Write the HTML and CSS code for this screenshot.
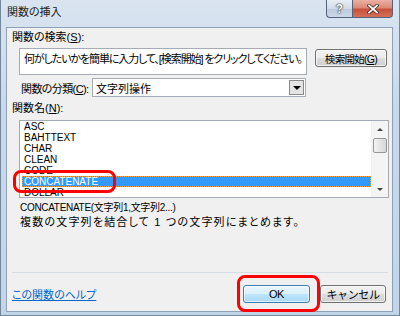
FILE: index.html
```html
<!DOCTYPE html>
<html lang="ja">
<head>
    <meta charset="UTF-8">
    <title>関数の挿入</title>
    <link rel="stylesheet" href="styles.css">
</head>
<body>

    <div class="window">
        <div class="titlebar">
            <span class="title">関数の挿入</span>
            <div class="caption-buttons">
                <span class="cap help">?</span>
                <span class="cap close">
                    <svg width="12" height="10" viewBox="0 0 12 10">
                        <path d="M2 1.5 L10 8.5 M10 1.5 L2 8.5" stroke="#4a2a22" stroke-width="3.4" stroke-linecap="square"/>
                        <path d="M2 1.5 L10 8.5 M10 1.5 L2 8.5" stroke="#fff" stroke-width="1.8" stroke-linecap="square"/>
                    </svg>
                </span>
            </div>
        </div>

        <div class="client">
            <div class="label">関数の検索(<u>S</u>):</div>
            <div class="search-row">
                <div class="textbox">何がしたいかを簡単に入力して、[検索開始] をクリックしてください。</div>
                <button class="btn search-btn">検索開始(<u>G</u>)</button>
            </div>

            <div class="category-row">
                <span class="category-label">関数の分類(<u>C</u>):</span>
                <div class="combo">
                    <span class="combo-value">文字列操作</span>
                    <span class="combo-drop"><span class="tri-down"></span></span>
                </div>
            </div>

            <div class="label label-names">関数名(<u>N</u>):</div>
            <div class="listbox">
                <ul class="items">
                    <li>ASC</li>
                    <li>BAHTTEXT</li>
                    <li>CHAR</li>
                    <li>CLEAN</li>
                    <li>CODE</li>
                    <li class="selected">CONCATENATE</li>
                    <li>DOLLAR</li>
                </ul>
                <div class="scrollbar">
                    <span class="sb-arrow"><span class="tri-up"></span></span>
                    <span class="sb-thumb"></span>
                    <span class="sb-track"></span>
                    <span class="sb-arrow"><span class="tri-down small"></span></span>
                </div>
            </div>

            <div class="syntax">CONCATENATE(文字列1,文字列2...)</div>
            <div class="desc">複数の文字列を結合して 1 つの文字列にまとめます。</div>

            <div class="separator"></div>

            <div class="footer">
                <a class="help-link" href="#">この関数のヘルプ</a>
                <div class="actions">
                    <button class="btn default">OK</button>
                    <button class="btn">キャンセル</button>
                </div>
            </div>
        </div>

        <!-- red annotation marks -->
        <div class="mark mark-list"></div>
        <div class="mark mark-ok"></div>
    </div>

</body>
</html>
```

FILE: styles.css
```css
body {
    margin: 0;
    font-family: "Liberation Sans", "Noto Sans CJK JP", sans-serif;
    font-size: 11px;
    color: #000;
    font-feature-settings: "palt";
}

.window {
    position: relative;
    width: 400px;
    height: 316px;
    box-sizing: border-box;
    border: 1px solid #73879d;
    border-top: none;
    background: linear-gradient(to bottom, #d9e4f0 0%, #c9d9ea 35%, #c3d5e9 100%);
}

.titlebar {
    height: 27px;
    display: flex;
    justify-content: space-between;
    align-items: flex-start;
    padding: 0 6px;
    box-sizing: border-box;
}

.title {
    margin-top: 5px;
    line-height: 14px;
    color: #222;
}

.caption-buttons {
    display: flex;
}

.cap {
    height: 18px;
    box-sizing: border-box;
    border: 1px solid #55647a;
    border-top: none;
    display: flex;
    align-items: center;
    justify-content: center;
}

.cap.help {
    width: 26px;
    border-right: none;
    border-radius: 0 0 0 4px;
    background: linear-gradient(to bottom, #e8eef5 0%, #d2dce8 50%, #bccadb 51%, #cad7e6 100%);
    color: #fff;
    font-weight: bold;
    font-size: 12px;
    text-shadow: 0 0 1px #3a3a3a, 0 0 1px #3a3a3a, 0 0 2px #555;
}

.cap.close {
    width: 41px;
    border-radius: 0 0 4px 0;
    background: linear-gradient(to bottom, #eab0a3 0%, #db8a77 45%, #c7503a 55%, #d4705a 100%);
}

.client {
    margin: 0 6px 0 5px;
    height: 285px;
    box-sizing: border-box;
    border: 1px solid #8fa1b6;
    background: #f0f0f0;
    padding: 0 4px 0 5px;
    white-space: nowrap;
}

.label {
    margin-top: 2px;
    line-height: 14px;
}

.search-row {
    display: flex;
    align-items: flex-start;
    margin-top: 4px;
    padding-left: 7px;
}

.textbox {
    width: 288px;
    height: 27px;
    box-sizing: border-box;
    border: 1px solid #a5acb5;
    background: #fff;
    padding: 3px 4px;
    line-height: 14px;
    letter-spacing: -1.1px;
    overflow: hidden;
}

.btn {
    height: 18px;
    padding: 0;
    font-family: inherit;
    font-size: 11px;
    color: #000;
    letter-spacing: -0.4px;
    white-space: nowrap;
    border: 1px solid #707070;
    border-radius: 3px;
    background: linear-gradient(to bottom, #f2f2f2 0%, #ebebeb 50%, #dddddd 51%, #cfcfcf 100%);
    box-shadow: inset 0 0 0 1px rgba(255, 255, 255, 0.7);
}

.search-btn {
    width: 72px;
    margin: 1px 0 0 8px;
    font-size: 10.5px;
    letter-spacing: -0.7px;
}

.category-row {
    display: flex;
    align-items: center;
    margin-top: 3px;
    padding-left: 9px;
}

.category-label {
    width: 71px;
    letter-spacing: -0.6px;
}

.combo {
    width: 214px;
    height: 19px;
    box-sizing: border-box;
    border: 1px solid #a5acb5;
    background: #fff;
    display: flex;
    align-items: center;
    justify-content: space-between;
}

.combo-value {
    padding-left: 3px;
}

.combo-drop {
    width: 15px;
    height: 15px;
    margin-right: 1px;
    box-sizing: border-box;
    border: 1px solid #8a8a8a;
    background: #e3e3e3;
    display: flex;
    align-items: center;
    justify-content: center;
}

.tri-down {
    width: 0;
    height: 0;
    border-left: 4px solid transparent;
    border-right: 4px solid transparent;
    border-top: 4px solid #000;
}

.tri-down.small {
    border-left-width: 3px;
    border-right-width: 3px;
    border-top-width: 3px;
    border-top-color: #444;
}

.tri-up {
    width: 0;
    height: 0;
    border-bottom: 3px solid #444;
    border-left: 3px solid transparent;
    border-right: 3px solid transparent;
}

.label-names {
    margin-top: 4px;
}

.listbox {
    margin: 5px 0 0 7px;
    width: 370px;
    height: 78px;
    box-sizing: border-box;
    border: 1px solid #a5acb5;
    background: #fff;
    display: flex;
    overflow: hidden;
}

.items {
    flex: 1;
    list-style: none;
    margin: 0;
    padding: 0 0 0 2px;
    font-size: 10px;
}

.items li {
    height: 11px;
    line-height: 11px;
    padding-left: 2px;
    box-sizing: border-box;
}

.items li.selected {
    background: #3399ff;
    color: #fff;
    border: 1px dotted #f0a040;
    line-height: 9px;
    padding-left: 1px;
}

.scrollbar {
    width: 16px;
    display: flex;
    flex-direction: column;
    background: #f4f4f4;
    border-left: 1px solid #f0f0f0;
}

.sb-arrow {
    height: 16px;
    display: flex;
    align-items: center;
    justify-content: center;
}

.sb-thumb {
    height: 15px;
    margin: 1px 1px 0;
    box-sizing: border-box;
    border: 1px solid #979797;
    border-radius: 2px;
    background: linear-gradient(to right, #f3f3f3, #e4e4e4 50%, #d8d8d8);
}

.sb-track {
    flex: 1;
}

.syntax {
    margin-top: 3px;
    padding-left: 8px;
    line-height: 14px;
    font-size: 10px;
    letter-spacing: -0.3px;
}

.desc {
    padding-left: 8px;
    line-height: 15px;
    letter-spacing: 1.2px;
}

.separator {
    margin-top: 42px;
    border-top: 1px solid #d5dfe5;
}

.footer {
    display: flex;
    align-items: center;
    padding: 12px 2px 0 0;
}

.help-link {
    color: #0066cc;
    text-decoration: underline;
}

.actions {
    margin-left: auto;
    display: flex;
    gap: 10px;
}

.actions .btn {
    width: 66px;
}

.btn.default {
    width: 67px;
    border-color: #3c7fb1;
    background: linear-gradient(to bottom, #eaf6fd 0%, #d9f0fc 50%, #bee6fd 51%, #a7d9f5 100%);
    box-shadow: inset 0 0 0 1px rgba(255, 255, 255, 0.6);
}

.mark {
    position: absolute;
    box-sizing: border-box;
    border: 3px solid #ff0000;
    border-radius: 8px;
}

.mark-list {
    left: 12px;
    top: 170px;
    width: 103px;
    height: 23px;
}

.mark-ok {
    left: 236px;
    top: 275px;
    width: 83px;
    height: 37px;
}
```
